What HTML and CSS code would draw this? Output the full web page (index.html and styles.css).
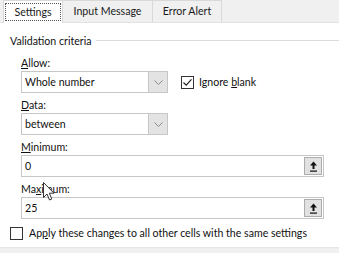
FILE: index.html
```html
<!DOCTYPE html>
<html lang="en">
<head>
  <meta charset="UTF-8" />
  <title>Data Validation</title>
  <link rel="stylesheet" href="styles.css">
</head>
<body>
  <div class="dialog">
    <!-- Tab strip -->
    <div class="tabs">
      <div class="tab active"><span class="focus">Settings</span></div>
      <div class="tab input-tab">Input Message</div>
      <div class="tab error-tab">Error Alert</div>
    </div>

    <div class="panel">
      <div class="group-title"><span>Validation criteria</span></div>

      <div class="form">
        <div class="row">
          <div class="col">
            <div class="label"><u>A</u>llow:</div>
            <div class="select">
              <span class="value">Whole number</span>
              <span class="drop"><svg width="9" height="5" viewBox="0 0 9 5"><path d="M0.5 0.5 L4.5 4.5 L8.5 0.5" fill="none" stroke="#8a8a8a" stroke-width="1"/></svg></span>
            </div>
          </div>
          <label class="check ignore">
            <span class="box"><svg width="11" height="11" viewBox="0 0 11 11"><path d="M1.5 5.5 L4.2 8.2 L9.5 2.3" fill="none" stroke="#222" stroke-width="1.2"/></svg></span>
            <span>Ignore <u>b</u>lank</span>
          </label>
        </div>

        <div class="label"><u>D</u>ata:</div>
        <div class="select">
          <span class="value">between</span>
          <span class="drop"><svg width="9" height="5" viewBox="0 0 9 5"><path d="M0.5 0.5 L4.5 4.5 L8.5 0.5" fill="none" stroke="#8a8a8a" stroke-width="1"/></svg></span>
        </div>

        <div class="label"><u>M</u>inimum:</div>
        <div class="input">
          <span class="value">0</span>
          <span class="ref"><svg width="9" height="11" viewBox="0 0 9 11"><path d="M4.5 0.5 L1 4.5 H3.5 V8 H5.5 V4.5 H8 Z" fill="#111"/><rect x="1" y="9.5" width="7" height="1.2" fill="#111"/></svg></span>
        </div>

        <div class="label">Ma<u>x</u>imum:</div>
        <div class="input">
          <span class="value">25</span>
          <span class="ref"><svg width="9" height="11" viewBox="0 0 9 11"><path d="M4.5 0.5 L1 4.5 H3.5 V8 H5.5 V4.5 H8 Z" fill="#111"/><rect x="1" y="9.5" width="7" height="1.2" fill="#111"/></svg></span>
        </div>
      </div>

      <label class="check apply">
        <span class="box"></span>
        <span>Ap<u>p</u>ly these changes to all other cells with the same settings</span>
      </label>
    </div>

    <div class="footer"></div>

    <!-- mouse pointer over the Maximum label -->
    <svg class="cursor" width="13" height="20" viewBox="0 0 13 20">
      <path d="M0.5 0.5 V15.5 L4 12 L6.5 18 L8.8 17 L6.3 11.2 H11 Z" fill="#fff" stroke="#333" stroke-width="1"/>
    </svg>
  </div>
</body>
</html>
```

FILE: styles.css
```css
body {
  margin: 0;
  font-family: Lato, "Noto Sans", sans-serif;
  font-size: 10.6px;
  color: #111;
  background: #fff;
}
.dialog {
  position: relative;
  width: 339px;
  height: 253px;
  overflow: hidden;
  background: #fff;
}
.tabs {
  display: flex;
  height: 23px;
  padding-left: 3px;
  background: #f0f0f0;
  border-bottom: 1px solid #e3e3e3;
  box-sizing: border-box;
}
.tab {
  line-height: 21px;
  text-align: center;
  border: 1px solid #d9d9d9;
  border-bottom: none;
  border-left: none;
  background: #f0f0f0;
  color: #1a1a1a;
  box-sizing: border-box;
  white-space: nowrap;
}
.input-tab {
  width: 90px;
}
.error-tab {
  width: 69px;
}
.tab.active {
  width: 60px;
  background: #fff;
  border-left: 1px solid #d9d9d9;
  height: 23px;
  padding: 2px 1px 0;
  margin-bottom: -1px;
}
.focus {
  display: block;
  border: 1px dotted #555;
  line-height: 16px;
}
.panel {
  padding: 10px 0 0 10px;
}
.group-title {
  display: flex;
  align-items: center;
  line-height: 16px;
}
.group-title::after {
  content: "";
  flex: 1;
  height: 1px;
  background: #dcdcdc;
  margin-left: 5px;
  margin-top: -2px;
}
.form {
  margin-top: 2px;
  padding-left: 11px;
  width: 303px;
}
.row {
  display: flex;
  align-items: flex-end;
}
.col {
  width: 147px;
}
.label {
  padding-top: 4px;
  line-height: 16px;
}
.select, .input {
  display: flex;
  height: 22px;
  border: 1px solid #c6c6c6;
  box-sizing: border-box;
  background: #fff;
}
.select {
  width: 147px;
}
.value {
  flex: 1;
  padding-left: 3px;
  line-height: 20px;
}
.drop {
  width: 18px;
  background: #e3e3e3;
  border-left: 1px solid #c6c6c6;
  display: flex;
  align-items: center;
  justify-content: center;
}
.ref {
  width: 18px;
  margin: 1px;
  background: #e1e1e1;
  border: 1px solid #adadad;
  box-sizing: border-box;
  display: flex;
  align-items: center;
  justify-content: center;
}
.check {
  display: flex;
  align-items: center;
  line-height: 16px;
  white-space: nowrap;
}
.box {
  width: 13px;
  height: 13px;
  border: 1px solid #333;
  box-sizing: border-box;
  background: #fff;
  margin-right: 5px;
  display: flex;
  align-items: center;
  justify-content: center;
}
.ignore {
  margin-left: 13px;
  margin-bottom: 3px;
}
.apply {
  margin-top: 6px;
}
.apply .box {
  margin-right: 6px;
}
.footer {
  position: absolute;
  left: 0;
  right: 0;
  bottom: 0;
  height: 5px;
  background: #f0f0f0;
  border-top: 1px solid #e6e6e6;
}
.cursor {
  position: absolute;
  left: 43px;
  top: 182px;
}
```
